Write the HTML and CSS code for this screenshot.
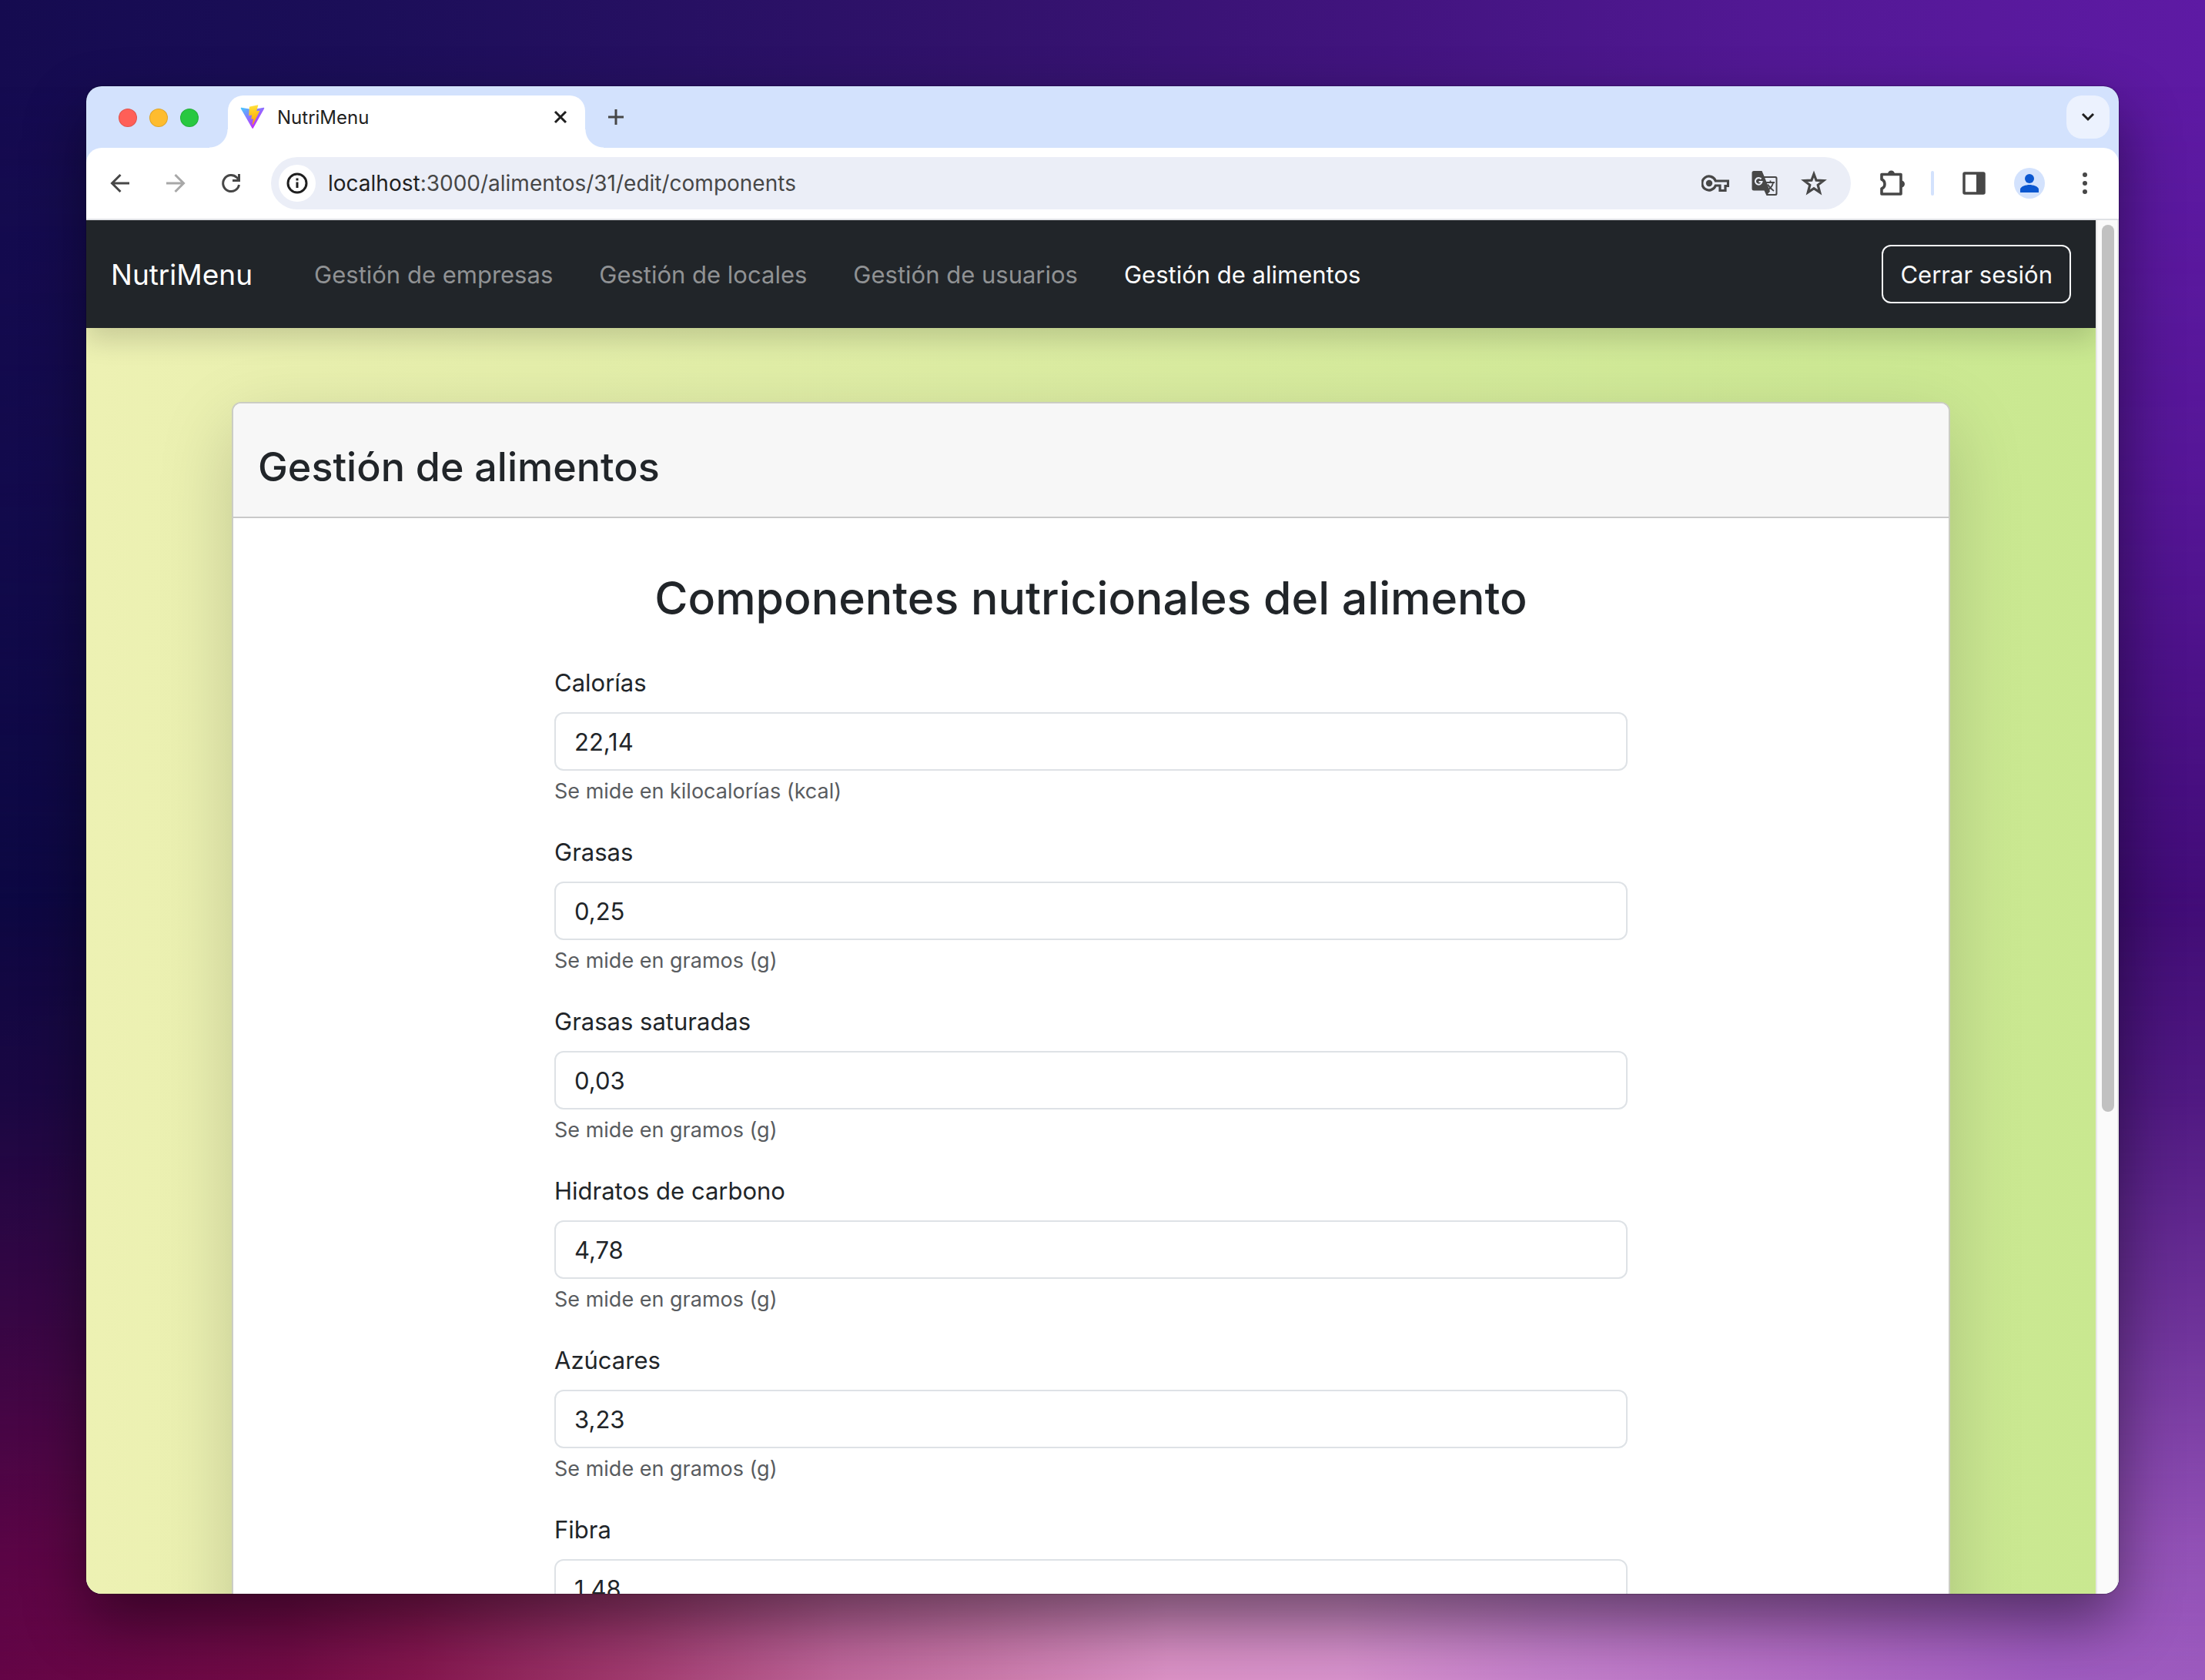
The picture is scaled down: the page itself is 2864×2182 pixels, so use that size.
FILE: index.html
```html
<!DOCTYPE html>
<html lang="es">
<head>
<meta charset="utf-8">
<meta name="viewport" content="width=device-width, initial-scale=1">
<title>NutriMenu</title>
<link rel="stylesheet" href="styles.css">
</head>
<body>
<div class="browser">
  <header class="tab-strip">
    <div class="traffic-lights">
      <span class="light light-close"></span>
      <span class="light light-min"></span>
      <span class="light light-max"></span>
    </div>
    <div class="tab">
      <svg class="favicon" viewBox="0 0 410 404" aria-hidden="true">
        <defs>
          <linearGradient id="viteBody" x1="6" y1="33" x2="235" y2="344" gradientUnits="userSpaceOnUse"><stop stop-color="#41D1FF"/><stop offset="1" stop-color="#BD34FE"/></linearGradient>
          <linearGradient id="viteBolt" x1="194.651" y1="8.818" x2="236.076" y2="292.989" gradientUnits="userSpaceOnUse"><stop stop-color="#FFEA83"/><stop offset=".083" stop-color="#FFDD35"/><stop offset="1" stop-color="#FFA800"/></linearGradient>
        </defs>
        <path d="M399.641 59.525 215.643 388.545C211.844 395.338 202.084 395.378 198.228 388.618L10.582 59.556C6.381 52.19 12.68 43.266 21.028 44.758L205.223 77.682C206.398 77.892 207.601 77.89 208.776 77.676L389.119 44.806C397.439 43.289 403.768 52.143 399.641 59.525Z" fill="url(#viteBody)"/>
        <path d="M292.965 1.574 156.801 28.255C154.563 28.694 152.906 30.59 152.771 32.866L144.395 174.33C144.198 177.662 147.258 180.248 150.51 179.498L188.42 170.749C191.967 169.931 195.172 173.055 194.443 176.622L183.18 231.775C182.422 235.487 185.907 238.661 189.532 237.56L212.947 230.446C216.577 229.344 220.065 232.527 219.297 236.242L201.398 322.875C200.278 328.294 207.486 331.249 210.492 326.603L212.5 323.5 323.454 102.072C325.312 98.365 322.108 94.137 318.036 94.923L279.014 102.454C275.347 103.161 272.227 99.746 273.262 96.158L298.731 7.867C299.767 4.273 296.636.855 292.965 1.574Z" fill="url(#viteBolt)"/>
      </svg>
      <span class="tab-title">NutriMenu</span>
      <button class="icon-button tab-close" aria-label="Cerrar pestaña"><svg width="20" height="20" viewBox="0 0 20 20"><path d="M3 3 17 17M17 3 3 17" fill="none" stroke="#1f1f1f" stroke-width="3"/></svg></button>
    </div>
    <button class="icon-button new-tab" aria-label="Pestaña nueva"><svg width="24" height="24" viewBox="0 0 24 24"><path d="M12 2V22M2 12H22" fill="none" stroke="#474747" stroke-width="3"/></svg></button>
    <button class="icon-button tab-search" aria-label="Buscar pestañas"><svg width="20" height="20" viewBox="0 0 20 20"><path d="M3 6 10 13 17 6" fill="none" stroke="#1f1f1f" stroke-width="3"/></svg></button>
  </header>

  <div class="toolbar">
    <div class="history-buttons">
      <button class="icon-button" aria-label="Atrás"><svg width="32" height="32" viewBox="0 0 32 32"><path d="M28 16H6M16.500 5 5.500 16 16.500 27" fill="none" stroke="#474747" stroke-width="3"/></svg></button>
      <button class="icon-button" aria-label="Adelante"><svg width="32" height="32" viewBox="0 0 32 32"><path d="M4 16H26M15.500 5 26.500 16 15.500 27" fill="none" stroke="#a8a8a8" stroke-width="3"/></svg></button>
      <button class="icon-button" aria-label="Recargar"><svg width="32" height="32" viewBox="0 0 32 32"><path d="M26.500 18A10.500 10.500 0 1 1 23.500 8.500L26 11" fill="none" stroke="#474747" stroke-width="3"/><path d="M28 4V14H18V11H25V4Z" fill="#474747"/></svg></button>
    </div>
    <div class="omnibox">
      <span class="site-info"><svg width="32" height="32" viewBox="0 0 32 32"><circle cx="16" cy="16" r="12" fill="none" stroke="#1f1f1f" stroke-width="3"/><path d="M14.500 14.500h3V22h-3zM14.500 9.500h3v3h-3z" fill="#1f1f1f"/></svg></span>
      <div class="url"><span class="url-host">localhost</span>:3000/alimentos/31/edit/components</div>
      <button class="icon-button" aria-label="Contraseñas"><svg width="36" height="36" viewBox="0 0 36 36"><path d="M18.300 15A9 9 0 1 0 18.300 21H24V27.500H31V21.500H34.500V15Z" fill="none" stroke="#474747" stroke-width="3.200"/><circle cx="10" cy="18" r="4.200" fill="#474747"/></svg></button>
      <button class="icon-button" aria-label="Traducir"><svg width="36" height="36" viewBox="0 0 36 36"><path d="M4 2H14.500L17.500 9H32A2.500 2.500 0 0 1 34.500 11.500V31.500A2.500 2.500 0 0 1 32 34H20.500L17.500 27.500H4A2.500 2.500 0 0 1 1.500 25V4.500A2.500 2.500 0 0 1 4 2Z" fill="#474747"/><path d="M18.300 11H31.500A1 1 0 0 1 32.500 12V31A1 1 0 0 1 31.500 32H22L25 28.500Z" fill="#ebeef7"/><path d="M13.500 12.500A4.300 4.300 0 1 0 14.500 16H10.500" fill="none" stroke="#ebeef7" stroke-width="2"/><path d="M20 17H31M25.500 14.500V17M29 17.500C28 21.500 25 25 22.500 26.500M22 19.500C24 23 26.500 25.500 30 28" fill="none" stroke="#474747" stroke-width="1.800"/></svg></button>
      <button class="icon-button" aria-label="Añadir a marcadores"><svg width="36" height="36" viewBox="0 0 36 36"><path d="M18 6 21.100 14.200 30.500 14.700 23.200 20.300 25.700 29.800 18 24.600 10.300 29.800 12.800 20.300 5.500 14.700 14.900 14.200Z" fill="none" stroke="#474747" stroke-width="3.200"/></svg></button>
    </div>
    <div class="toolbar-actions">
      <button class="icon-button" aria-label="Extensiones"><svg width="40" height="40" viewBox="0 0 40 40"><path d="M6 8.500H31V34H6V27A6.500 6.500 0 0 0 6 15Z" fill="none" stroke="#474747" stroke-width="3.600" stroke-linejoin="round"/><path d="M14 8A4.500 4.500 0 0 1 23 8ZM31.500 16.500A4.500 4.500 0 0 1 31.500 25.500Z" fill="#474747"/></svg></button>
      <span class="toolbar-divider"></span>
      <button class="icon-button" aria-label="Panel lateral"><svg width="36" height="36" viewBox="0 0 36 36"><rect x="5" y="5" width="26" height="26" rx="1" fill="none" stroke="#474747" stroke-width="3.500"/><path d="M21 5H31V31H21Z" fill="#474747"/></svg></button>
      <button class="icon-button avatar" aria-label="Perfil"><svg width="24" height="24" viewBox="0 0 24 24"><circle cx="12" cy="6" r="6" fill="#0b57d0"/><path d="M0 24V20C0 16 8 14 12 14S24 16 24 20V24Z" fill="#0b57d0"/></svg></button>
      <button class="icon-button" aria-label="Menú"><svg width="36" height="36" viewBox="0 0 36 36" fill="#474747"><circle cx="18" cy="7" r="3"/><circle cx="18" cy="18" r="3"/><circle cx="18" cy="29" r="3"/></svg></button>
    </div>
  </div>

  <div class="viewport">
    <div class="page">
      <nav class="navbar">
        <a class="brand" href="#">NutriMenu</a>
        <div class="nav-links">
          <a class="nav-link" href="#">Gestión de empresas</a>
          <a class="nav-link" href="#">Gestión de locales</a>
          <a class="nav-link" href="#">Gestión de usuarios</a>
          <a class="nav-link nav-link-active" href="#">Gestión de alimentos</a>
        </div>
        <button class="logout">Cerrar sesión</button>
      </nav>
      <main class="card">
        <div class="card-header"><h1 class="card-title">Gestión de alimentos</h1></div>
        <form class="card-body">
          <h2 class="form-title">Componentes nutricionales del alimento</h2>
          <div class="fields">
            <div class="field"><label for="calorias">Calorías</label><input id="calorias" type="text" value="22,14"><p class="hint">Se mide en kilocalorías (kcal)</p></div>
            <div class="field"><label for="grasas">Grasas</label><input id="grasas" type="text" value="0,25"><p class="hint">Se mide en gramos (g)</p></div>
            <div class="field"><label for="saturadas">Grasas saturadas</label><input id="saturadas" type="text" value="0,03"><p class="hint">Se mide en gramos (g)</p></div>
            <div class="field"><label for="hidratos">Hidratos de carbono</label><input id="hidratos" type="text" value="4,78"><p class="hint">Se mide en gramos (g)</p></div>
            <div class="field"><label for="azucares">Azúcares</label><input id="azucares" type="text" value="3,23"><p class="hint">Se mide en gramos (g)</p></div>
            <div class="field"><label for="fibra">Fibra</label><input id="fibra" type="text" value="1,48"></div>
          </div>
        </form>
      </main>
    </div>
    <div class="scrollbar"><div class="scroll-thumb"></div></div>
  </div>
</div>
</body>
</html>
```

FILE: styles.css
```css
* {
  box-sizing: border-box;
}

body {
  position: relative;
  isolation: isolate;
  margin: 0;
  height: 100vh;
  padding: 112px;
  overflow: hidden;
  font-family: Inter, "Liberation Sans", sans-serif;
  color: #212529;
  background: linear-gradient(90deg, #150b50 0%, #1b0e58 16%, #261062 30%, #32126c 45%, #42147f 63%, #521894 80%, #5e1aa4 100%);
}

/* Wallpaper: a dark middle band and a pink and violet glow at the bottom */
body::before,
body::after {
  content: "";
  position: absolute;
  inset: 0;
  z-index: -1;
}

body::before {
  background: linear-gradient(90deg, #0c0842, #410c76);
  -webkit-mask-image: linear-gradient(transparent 5%, rgba(0, 0, 0, 0.25) 28%, #000 55%);
  mask-image: linear-gradient(transparent 5%, rgba(0, 0, 0, 0.25) 28%, #000 55%);
}

body::after {
  background: linear-gradient(90deg, #640446 0%, #720b45 13%, #85164e 19%, #a33c70 29%, #c0669a 38%, #cc7aab 45%, #dc92c6 53%, #d892cc 61%, #c580cb 70%, #b46dc6 82%, #a05cc0 93%, #9c5abe 100%);
  -webkit-mask-image: linear-gradient(transparent 53%, rgba(0, 0, 0, 0.16) 65%, rgba(0, 0, 0, 0.5) 79%, rgba(0, 0, 0, 0.88) 92%, #000 100%);
  mask-image: linear-gradient(transparent 53%, rgba(0, 0, 0, 0.16) 65%, rgba(0, 0, 0, 0.5) 79%, rgba(0, 0, 0, 0.88) 92%, #000 100%);
}

h1,
h2,
p {
  margin: 0;
}

button,
input {
  font: inherit;
  color: inherit;
}

.browser {
  height: 100%;
  display: flex;
  flex-direction: column;
  overflow: hidden;
  border-radius: 20px;
  background: #d3e2fd;
  box-shadow: 0 0 2px rgba(0, 0, 0, 0.6), 0 36px 80px rgba(0, 0, 0, 0.45);
}

.icon-button {
  display: flex;
  align-items: center;
  justify-content: center;
  flex: none;
  padding: 0;
  border: 0;
  background: none;
}

/* Tab strip */
.tab-strip {
  display: flex;
  height: 80px;
  padding: 12px 12px 0 42px;
}

.traffic-lights {
  display: flex;
  gap: 16px;
  width: 142px;
  padding-top: 17px;
}

.light {
  width: 24px;
  height: 24px;
  border-radius: 50%;
  border: 1px solid rgba(0, 0, 0, 0.12);
}

.light-close { background: #ff5f57; }
.light-min { background: #febc2e; }
.light-max { background: #28c840; }

.tab {
  position: relative;
  display: flex;
  align-items: center;
  width: 464px;
  padding: 0 22px 12px 16px;
  border-radius: 20px 20px 0 0;
  background: #fff;
}

/* Flared feet of the active tab */
.tab::before,
.tab::after {
  content: "";
  position: absolute;
  bottom: 0;
  width: 24px;
  height: 24px;
}

.tab::before {
  right: 100%;
  background: radial-gradient(circle at 0 0, transparent 23px, #fff 24px);
}

.tab::after {
  left: 100%;
  background: radial-gradient(circle at 100% 0, transparent 23px, #fff 24px);
}

.favicon {
  width: 32px;
  height: 32px;
}

.tab-title {
  flex: 1;
  padding-left: 16px;
  font-size: 24px;
  color: #1f1f1f;
}

.new-tab {
  width: 56px;
  height: 56px;
  margin-left: 12px;
}

.tab-search {
  width: 56px;
  height: 56px;
  margin-left: auto;
  border-radius: 20px;
  background: #ecf2fe;
}

/* Toolbar */
.toolbar {
  display: flex;
  align-items: center;
  height: 94px;
  padding: 0 26px 0 28px;
  gap: 34px;
  border-bottom: 2px solid #dfe1e5;
  border-radius: 20px 20px 0 0;
  background: #fff;
}

.history-buttons {
  display: flex;
  align-items: center;
  gap: 40px;
  padding-right: 2px;
}

.toolbar-actions {
  display: flex;
  align-items: center;
  gap: 34px;
}

.omnibox {
  flex: 1;
  display: flex;
  align-items: center;
  gap: 28px;
  height: 68px;
  padding: 0 30px 0 10px;
  border-radius: 34px;
  background: #ebeef7;
}

.site-info {
  display: flex;
  align-items: center;
  justify-content: center;
  width: 48px;
  height: 48px;
  border-radius: 50%;
  background: #fff;
}

.url {
  flex: 1;
  margin-left: -12px;
  font-size: 28px;
  color: #474747;
}

.url-host {
  color: #1f1f1f;
}

.toolbar-divider {
  width: 4px;
  height: 32px;
  margin-left: -4px;
  border-radius: 2px;
  background: #d3e2fd;
}

.avatar {
  width: 40px;
  height: 40px;
  border-radius: 50%;
  background: #d3e2fd;
}

/* Web page */
.viewport {
  flex: 1;
  min-height: 0;
  display: flex;
}

.page {
  flex: 1;
  min-width: 0;
  overflow: hidden;
  background: linear-gradient(90deg, #edf1b3, #c9e890);
}

.navbar {
  position: relative;
  display: flex;
  align-items: center;
  height: 140px;
  padding: 0 32px;
  background: #212529;
  box-shadow: 0 16px 32px rgba(0, 0, 0, 0.15);
}

.brand {
  font-size: 37px;
  color: #fff;
  text-decoration: none;
}

.nav-links {
  flex: 1;
  display: flex;
  gap: 60px;
  padding-left: 80px;
}

.nav-link {
  font-size: 31px;
  color: #909294;
  text-decoration: none;
}

.nav-link-active {
  color: #fff;
}

.logout {
  height: 76px;
  padding: 0 22px;
  font-size: 31px;
  color: #f8f9fa;
  border: 2px solid #f8f9fa;
  border-radius: 12px;
  background: none;
}

.card {
  width: 2232px;
  max-width: 86%;
  margin: 96px auto 0;
  border: 2px solid #cbcdc4;
  border-radius: 12px;
  background: #fff;
  box-shadow: 0 32px 96px rgba(0, 0, 0, 0.175);
}

.card-header {
  padding: 48px 32px 29px;
  border-bottom: 2px solid #c9c9c9;
  border-radius: 10px 10px 0 0;
  background: #f7f7f7;
}

.card-title {
  font-size: 52px;
  line-height: 70px;
  font-weight: 500;
}

.card-body {
  padding: 66px 32px;
}

.form-title {
  font-size: 59px;
  line-height: 76px;
  font-weight: 500;
  text-align: center;
}

.fields {
  display: grid;
  gap: 34px;
  width: 1394px;
  max-width: 100%;
  margin: 48px auto 0;
}

.field label {
  display: block;
  margin-bottom: 14px;
  font-size: 31px;
  line-height: 48px;
}

.field input {
  display: block;
  width: 100%;
  height: 76px;
  padding: 0 24px;
  font-size: 31px;
  border: 2px solid #dee2e6;
  border-radius: 12px;
  background: #fff;
}

.hint {
  margin-top: 6px;
  font-size: 27px;
  line-height: 42px;
  color: #595c5f;
}

.scrollbar {
  width: 30px;
  padding: 6px;
  border: solid #e8e8e8;
  border-width: 0 2px;
  background: #fafafa;
}

.scroll-thumb {
  width: 16px;
  height: 65%;
  margin: 0 auto;
  border-radius: 8px;
  background: #c1c1c1;
}
```
